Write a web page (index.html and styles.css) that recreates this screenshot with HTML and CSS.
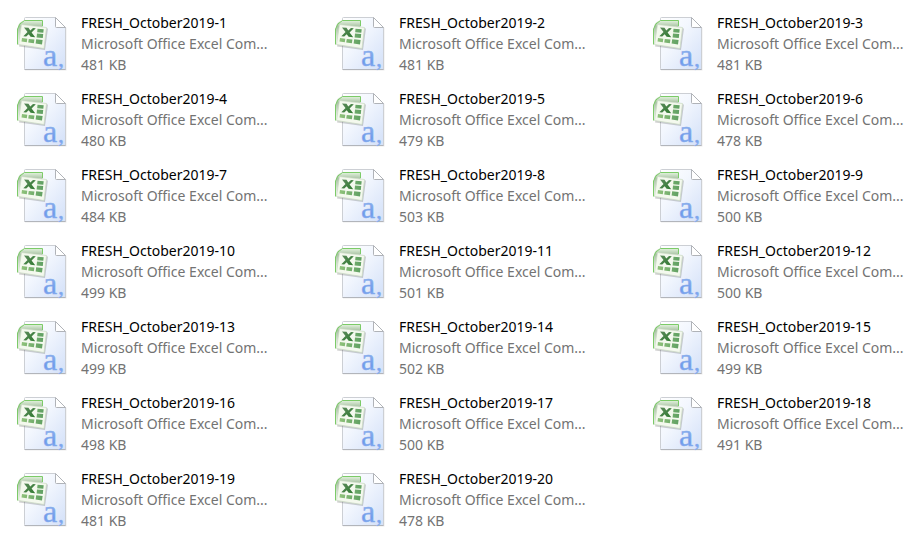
FILE: index.html
```html
<!DOCTYPE html>
<html lang="en">
<head>
  <meta charset="UTF-8" />
  <meta name="viewport" content="width=device-width, initial-scale=1.0"/>
  <title>FRESH October 2019</title>
  <link rel="stylesheet" href="styles.css">
</head>
<body>
  <!-- Shared file icon -->
  <svg class="sprite" aria-hidden="true">
    <defs>
      <linearGradient id="paper" x1="0" y1="0" x2="1" y2="1">
        <stop offset="0" stop-color="#ffffff"/>
        <stop offset="0.4" stop-color="#f3f7fe"/>
        <stop offset="1" stop-color="#d3e0f8"/>
      </linearGradient>
      <linearGradient id="letter" x1="0" y1="0" x2="0" y2="1">
        <stop offset="0.4" stop-color="#86abec"/>
        <stop offset="0.7" stop-color="#6f9aea"/>
        <stop offset="1" stop-color="#9cc0fa"/>
      </linearGradient>
      <linearGradient id="back" x1="0" y1="0" x2="0" y2="1">
        <stop offset="0" stop-color="#e3f3de"/>
        <stop offset="0.25" stop-color="#a9c2a4"/>
        <stop offset="1" stop-color="#ffffff"/>
      </linearGradient>
      <linearGradient id="cells" x1="0" y1="0" x2="1" y2="0">
        <stop offset="0" stop-color="#8fc27a"/>
        <stop offset="1" stop-color="#5f9f62"/>
      </linearGradient>
      <linearGradient id="cross" x1="0" y1="0" x2="1" y2="1">
        <stop offset="0" stop-color="#5d8a5c"/>
        <stop offset="1" stop-color="#2f7a2f"/>
      </linearGradient>
    </defs>
    <symbol id="csvIcon" viewBox="0 0 50 55">
      <path d="M8 2.500H39L49.500 12V54.500H8Z" fill="#000" opacity="0.08"/>
      <path d="M8.500 1.500H38.500L48.500 11.500V53.500H8.500Q7.500 53.500 7.500 52.500V2.500Q7.500 1.500 8.500 1.500Z" fill="url(#paper)" stroke="#cccfd4"/>
      <path d="M7.500 53.500H48.500" stroke="#b2b5bb"/>
      <path d="M38.500 1.500V10.500Q38.500 11.500 39.500 11.500H48.500Z" fill="#fff" stroke="#b0b3b8"/>
      <path d="M1 29V11Q2 4.500 8 4.500H25.500V11L5 9L3 29Z" fill="url(#back)"/>
      <path d="M0.500 28.500V13Q2 7 7.500 4.500H25.500V10" fill="none" stroke="#7ccb68"/>
      <path d="M6 9.500L31 12.500L28 34L2 30.500Z" fill="#000" opacity="0.18"/>
      <path d="M4.500 8.500L29.500 11.500L27 32.500L1.500 28.500Z" fill="#f4f9ee" stroke="#c9d8c1" stroke-width="0.700"/>
      <path d="M20.500 12.700L26.700 13.200L26.300 16.700L20.200 16.200ZM20 17.600L26.200 18.100L25.800 22L19.600 21.500ZM19.200 23.300L25.600 24.100L25 28.500L18.600 27.600ZM11.800 22.900L17.400 23.500L16.900 27.300L11.200 26.500ZM5 22L10.300 22.700L9.800 26.200L4.500 25.400Z" fill="url(#cells)"/>
      <path d="M7 11.500L11.500 11.700L13.300 14.400L16 12L18.800 12.300L14.600 16.500L18.200 21.200L13.600 20.800L11.700 18.200L9.200 20.400L6.300 20.200L10.500 16.100Z" fill="url(#cross)"/>
    </symbol>
  </svg>

  <!-- File list -->
  <main id="fileList" class="file-list"></main>

  <!-- Script -->
  <script>
    const fileList = document.getElementById('fileList');

    // File sizes in KB, in file order
    const sizes = [
      481, 481, 481, 480, 479, 478, 484, 503, 500, 499,
      501, 500, 499, 502, 499, 498, 500, 491, 481, 478
    ];

    sizes.forEach((size, index) => {
      const file = document.createElement('article');
      file.className = 'file';
      file.innerHTML = `
        <svg class="file-icon" viewBox="0 0 50 55" aria-hidden="true">
          <use href="#csvIcon"/>
          <text class="icon-letter" x="26" y="50">a<tspan class="icon-comma" x="41">,</tspan></text>
        </svg>
        <div class="file-info">
          <p class="file-name">FRESH_October2019-${index + 1}</p>
          <p>Microsoft Office Excel Com...</p>
          <p>${size} KB</p>
        </div>`;
      fileList.appendChild(file);
    });
  </script>
</body>
</html>
```
FILE: styles.css
```css
/* Global Styles */
body {
  font-family: 'Segoe UI', 'Noto Sans', sans-serif;
  font-size: 14px;
  line-height: 21px;
  color: #737373;
  background: #ffffff;
  margin: 0;
}

/* Holds the icon symbol only */
.sprite {
  position: absolute;
  width: 0;
  height: 0;
}

/* File List */
.file-list {
  display: grid;
  grid-template-columns: repeat(3, 1fr);
  column-gap: 64px;
  row-gap: 13px;
  padding: 12px 12px 0 17px;
}

.file {
  display: flex;
  align-items: center;
  gap: 14px;
  min-width: 0;
}

.file-icon {
  flex: none;
  width: 50px;
  height: 55px;
  overflow: visible;
}

.icon-letter {
  font-family: 'Liberation Serif', serif;
  font-size: 32px;
  fill: url(#letter);
  stroke: #86abec;
  stroke-width: 0.4px;
}

.icon-comma {
  font-size: 24px;
}

.file-info {
  min-width: 0;
  white-space: nowrap;
}

.file-info p {
  margin: 0;
}

.file-info .file-name {
  color: #000000;
}
```
